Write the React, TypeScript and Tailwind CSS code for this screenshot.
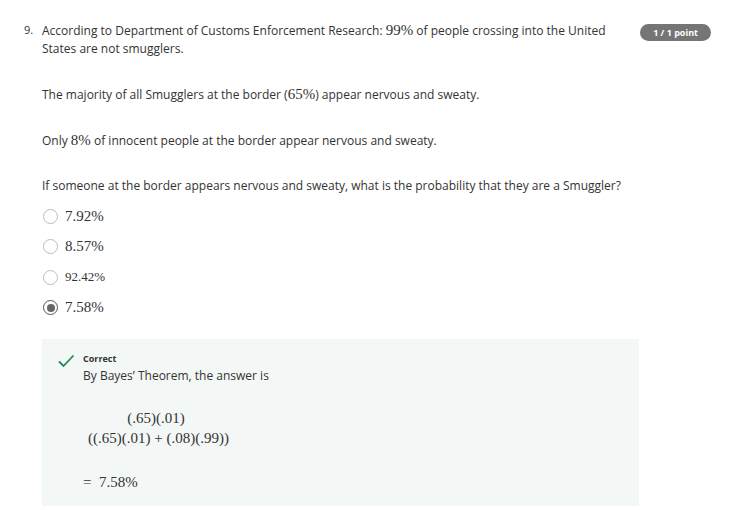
const sans = "font-['Open_Sans','Liberation_Sans',sans-serif]";

function M({ children }: { children: React.ReactNode }) {
  return <span className="font-['Liberation_Serif',serif] text-[15px]">{children}</span>;
}

function Radio({ checked }: { checked?: boolean }) {
  return (
    <span
      className={
        "flex h-[15px] w-[15px] shrink-0 items-center justify-center rounded-full border " +
        (checked ? "border-[#555] border-[1.5px]" : "border-[#bdbdbd]")
      }
    >
      {checked && <span className="h-[8px] w-[8px] rounded-full bg-[#666]" />}
    </span>
  );
}

const options = [
  { label: "7.92%", size: "text-[15px]" },
  { label: "8.57%", size: "text-[15px]" },
  { label: "92.42%", size: "text-[13px]" },
  { label: "7.58%", size: "text-[15px]", checked: true },
];

export default function App() {
  return (
    <div className={`min-h-[510px] w-[748px] bg-white text-[#333] ${sans} text-[12px]`}>
      <div className="flex pl-[24px] pr-[37px] pt-[21px]">
        <span className="w-[18px] shrink-0 text-[11px] leading-[18px]">9.</span>
        <div className="flex-1">
          <div className="flex items-start justify-between">
            <p className="w-[580px] leading-[18px]">
              According to Department of Customs Enforcement Research: <M>99%</M> of people crossing
              into the United States are not smugglers.
            </p>
            <span className="mt-[3px] rounded-full bg-[#757575] px-[13px] py-[2px] text-[9px] font-bold leading-[13px] text-white">
              1 / 1 point
            </span>
          </div>

          <p className="mt-[27px] leading-[18px]">
            The majority of all Smugglers at the border (<M>65%</M>) appear nervous and sweaty.
          </p>
          <p className="mt-[27px] leading-[18px]">
            Only <M>8%</M> of innocent people at the border appear nervous and sweaty.
          </p>
          <p className="mt-[27px] leading-[18px]">
            If someone at the border appears nervous and sweaty, what is the probability that they
            are a Smuggler?
          </p>

          <div className="mt-[12px] flex flex-col gap-[12.5px]">
            {options.map((o) => (
              <label key={o.label} className="flex h-[18px] items-center gap-[7px] pl-px">
                <Radio checked={o.checked} />
                <span className={`font-['Liberation_Serif',serif] ${o.size}`}>{o.label}</span>
              </label>
            ))}
          </div>

          <div className="mt-[22px] mr-[72px] bg-[#f3f8f6] pb-[14px] pt-[14px]">
            <div className="flex">
              <svg
                width="18"
                height="14"
                viewBox="0 0 18 14"
                className="ml-[15px] mt-[1px] shrink-0"
              >
                <path
                  d="M2 7.5 L6.5 12 L16.5 1.5"
                  fill="none"
                  stroke="#1e8a4f"
                  strokeWidth="1.8"
                />
              </svg>
              <div className="ml-[8px]">
                <div className="text-[9px] font-bold leading-[12px] text-[#333]">Correct</div>
                <p className="mt-[2px] leading-[18px]">By Bayes’ Theorem, the answer is</p>
                <div className="mt-[23px] flex w-fit flex-col items-center font-['Liberation_Serif',serif] text-[15px] leading-[20px]">
                  <span>(.65)(.01)</span>
                  <span className="pl-[5px]">((.65)(.01) + (.08)(.99))</span>
                </div>
                <p className="mt-[24px] font-['Liberation_Serif',serif] text-[15px] leading-[20px]">
                  = &nbsp;7.58%
                </p>
              </div>
            </div>
          </div>
        </div>
      </div>
    </div>
  );
}
